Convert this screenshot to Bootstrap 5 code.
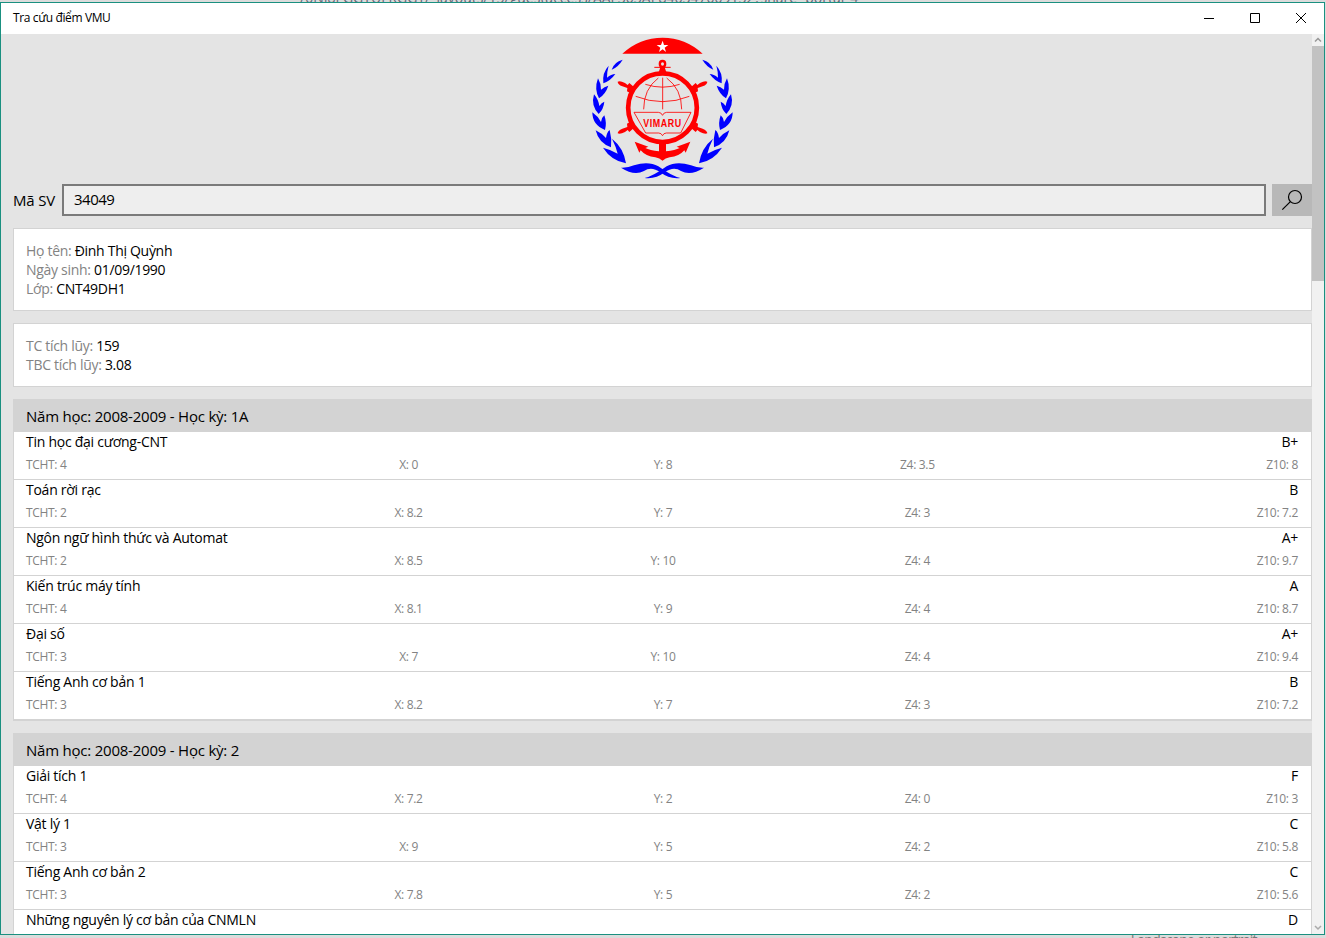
<!DOCTYPE html>
<html lang="vi">
<head>
<meta charset="utf-8">
<meta name="viewport" content="width=device-width, initial-scale=1">
<title>Tra cứu điểm VMU</title>
<link href="https://cdn.jsdelivr.net/npm/bootstrap@5.3.0/dist/css/bootstrap.min.css" rel="stylesheet">
<style>
  body { background: #dcdcdc; font-family: "Open Sans", "Noto Sans", sans-serif; color: #000; font-size: 14px; line-height: 19px; }
  .behind-top { height: 2px; line-height: 10px; font-size: 14px; color: #667; padding-left: 300px; }
  .behind-top span { position: relative; top: -7px; }
  .behind-bottom { height: 3px; line-height: 10px; font-size: 14px; color: #777; padding-left: 1117px; letter-spacing: -.7px; }
  .app-window { width: 1325px; height: 933px; border: 1px solid #1a9080; background: #e4e4e4; }
  .title-bar { height: 31px; background: #fff; font-size: 12px; padding: 0 12px; letter-spacing: -.38px; }
  .win-title { margin-top: -2px; }
  .win-buttons { gap: 34px; margin-right: 5px; margin-top: -1px; }
  .page-area { padding-left: 12px; min-width: 0; }
  .search-row { height: 32px; font-size: 15px; }
  .search-label { width: 49px; letter-spacing: -.15px; }
  .search-input.form-control { border: 2px solid #7a7a7a; border-radius: 0; background: #eee; color: #000; padding: 0 10px 2px; font-size: 15px; letter-spacing: -.5px; height: 32px; }
  .search-btn { width: 40px; height: 32px; background: #b8b8b8; border-radius: 0; margin-left: 6px; }
  .panel.card { border: 1px solid #d3d3d3; border-radius: 0; color: #000; margin-top: 12px; }
  .panel .card-body { padding: 12px; letter-spacing: -.3px; }
  .panel .card-header { height: 33px; background: #d3d3d3; border: 0; border-radius: 0; padding: 2px 12px 0 13px; margin: -1px -1px 0; font-size: 15px; line-height: 31px; letter-spacing: -.22px; }
  .course { height: 48px; padding: 0 13px 0 12px; border-bottom: 1px solid #d3d3d3; }
  .course-name { height: 21px; line-height: 19px; letter-spacing: -.26px; }
  .marks { font-size: 12px; line-height: 22px; padding-top: 1px; letter-spacing: -.32px; }
  .marks .text-center-col { padding-left: 2px; }
  .muted { color: #838383; }
  .scroll-track { width: 12px; background: #f1f1f1; }
  .scroll-thumb { height: 235px; background: #c2c2c2; }
  .scroll-arrow { height: 12px; }
</style>
</head>
<body class="vh-100 overflow-hidden">
<div class="behind-top overflow-hidden text-nowrap"><span>/0NI8LGGTUFRGGT/_layouts/15/guestaccess/AAF303AE846347009132?share=portal_4</span></div>
<div class="app-window d-flex flex-column overflow-hidden">
  <header class="title-bar d-flex flex-shrink-0 align-items-center justify-content-between">
    <span class="win-title">Tra cứu điểm VMU</span>
    <div class="win-buttons d-flex">
      <svg width="12" height="12" stroke="#000" fill="none"><path d="M1 6.500h10"/></svg>
      <svg width="12" height="12" stroke="#000" fill="none"><path d="M1.500 1.500h9v9h-9z"/></svg>
      <svg width="12" height="12" stroke="#000" fill="none"><path d="M1 1l10 10M11 1L1 11"/></svg>
    </div>
  </header>
  <div class="d-flex flex-grow-1 overflow-hidden">
    <main class="page-area flex-grow-1">
      <svg class="d-block mx-auto" width="156" height="150" viewBox="0 0 468 450">
        <path fill="#f00" d="M112 59Q164 11 233 11Q301 11 353 59Z"/>
        <path fill="#fff" d="M233 20l4 13h13l-11 8 4 13-10-8-11 8 4-13-11-8h13z"/>
        <g id="laurel" fill="#00f">
          <path d="M80 107Q87 84 113 77Q100 99 80 107Z"/>
          <path d="M71 95Q51 116 55 148Q77 140 91 120Q79 120 66 131Q66 112 71 95Z"/>
          <path d="M39 133Q27 165 42 193Q62 180 70 155Q58 158 48 167Q48 148 39 133Z"/>
          <path d="M27 181Q17 215 41 240Q56 225 58 203Q50 205 43 216Q40 196 27 181Z"/>
          <path d="M22 235Q22 273 60 288Q66 267 58 244Q50 250 48 264Q38 246 22 235Z"/>
          <path d="M32 289Q41 327 78 340Q81 314 74 288Q65 295 63 312Q49 297 32 289Z"/>
          <path d="M54 341Q79 380 123 388Q116 342 81 314Q93 338 98 359Q78 347 54 341Z"/>
        </g>
        <use href="#laurel" transform="translate(465 0) scale(-1 1)"/>
        <g id="ribbon" fill="#00f"><path d="M108 401Q129 402 147 394Q190 380 220 397Q263 428 286 432Q253 436 226 415Q199 395 177 411Q147 426 108 401Z"/></g>
        <use href="#ribbon" transform="translate(465 0) scale(-1 1)"/>
        <g fill="none" stroke="#f00">
          <circle cx="232.500" cy="221" r="103" stroke-width="14"/>
          <ellipse cx="232.500" cy="90" rx="8" ry="9" stroke-width="7"/>
          <path stroke-width="3" d="M208 100h49"/>
          <path stroke-width="2.500" d="M233 131V226M220 132Q176 165 176 226M245 132Q290 165 290 226M181 151Q233 168 284 151M152 187Q233 219 313 187"/>
          <path stroke-width="2.500" d="M147 235H220Q229 235 232.500 244Q236 235 245 235H318L287 297H244Q236 297 232.500 305Q229 297 221 297H182Z"/>
        </g>
        <path fill="#f00" d="M227 97h11l6 18h-23z"/>
        <g id="spoke" fill="#f00">
          <path d="M98 143Q105 139 120 147L128 153L133 147L151 163L140 180L126 172L127 162L112 157Q98 151 98 143Z"/>
          <path d="M98 298Q105 302 120 294L128 288L133 294L151 278L140 261L126 269L127 279L112 284Q98 290 98 298Z"/>
        </g>
        <use href="#spoke" transform="translate(465 0) scale(-1 1)"/>
        <path fill="#f00" d="M222 322H243V352Q271 349 284 342L275 338L316 323L302 356L298 349Q283 367 254 370Q241 372 232.500 380Q224 372 211 370Q182 367 167 349L163 356L149 323L190 338L181 342Q194 349 222 352Z"/>
        <text x="175" y="278" textLength="115" lengthAdjust="spacingAndGlyphs" font-family="Liberation Sans" font-size="31" letter-spacing="2" font-weight="bold" fill="#f00">VIMARU</text>
      </svg>
      <div class="search-row d-flex align-items-center">
        <label class="search-label flex-shrink-0" for="masv">Mã SV</label>
        <input id="masv" class="form-control search-input" value="34049">
        <button class="btn search-btn flex-shrink-0 p-0" aria-label="Tìm">
          <svg class="d-block mx-auto" width="22" height="22" fill="none" stroke="#000" stroke-width="1.200"><circle cx="14" cy="8" r="6.500"/><path d="M9.400 12.600L1.300 20.700"/></svg>
        </button>
      </div>
      <section class="card panel"><div class="card-body">
        <div><span class="muted">Họ tên:</span> Đinh Thị Quỳnh</div>
        <div><span class="muted">Ngày sinh:</span> 01/09/1990</div>
        <div><span class="muted">Lớp:</span> CNT49DH1</div>
      </div></section>
      <section class="card panel"><div class="card-body">
        <div><span class="muted">TC tích lũy:</span> 159</div>
        <div><span class="muted">TBC tích lũy:</span> 3.08</div>
      </div></section>
      <div id="semesters"></div>
    </main>
    <aside class="scroll-track d-flex flex-column flex-shrink-0">
      <svg class="scroll-arrow" width="12" height="12" fill="none" stroke="#999" stroke-width="1.500"><path d="M3 7.500l3-3 3 3"/></svg>
      <div class="scroll-thumb"></div>
      <svg class="scroll-arrow mt-auto" width="12" height="12" fill="none" stroke="#aaa" stroke-width="1.500"><path d="M3 4l3 3 3-3"/></svg>
    </aside>
  </div>
</div>
<div class="behind-bottom overflow-hidden text-nowrap">●&nbsp; Landscape or portrait</div>
<script src="https://cdn.jsdelivr.net/npm/bootstrap@5.3.0/dist/js/bootstrap.bundle.min.js"></script>
<script>
  // name, letter grade, credits, X, Y, Z4, Z10
  const semesters = [
    ['Năm học: 2008-2009 - Học kỳ: 1A', [
      ['Tin học đại cương-CNT', 'B+', 4, 0, 8, 3.5, 8],
      ['Toán rời rạc', 'B', 2, 8.2, 7, 3, 7.2],
      ['Ngôn ngữ hình thức và Automat', 'A+', 2, 8.5, 10, 4, 9.7],
      ['Kiến trúc máy tính', 'A', 4, 8.1, 9, 4, 8.7],
      ['Đại số', 'A+', 3, 7, 10, 4, 9.4],
      ['Tiếng Anh cơ bản 1', 'B', 3, 8.2, 7, 3, 7.2]]],
    ['Năm học: 2008-2009 - Học kỳ: 2', [
      ['Giải tích 1', 'F', 4, 7.2, 2, 0, 3],
      ['Vật lý 1', 'C', 3, 9, 5, 2, 5.8],
      ['Tiếng Anh cơ bản 2', 'C', 3, 7.8, 5, 2, 5.6],
      ['Những nguyên lý cơ bản của CNMLN', 'D']]]
  ];
  const centred = text => `<div class="col text-center-col">${text}</div>`;
  const marks = c => c.length < 3 ? '' : `
    <div class="marks muted row row-cols-5 g-0 text-center">
      <div class="col text-start">TCHT: ${c[2]}</div>${centred('X: ' + c[3])}${centred('Y: ' + c[4])}${centred('Z4: ' + c[5])}
      <div class="col text-end">Z10: ${c[6]}</div>
    </div>`;
  document.getElementById('semesters').innerHTML = semesters.map(([title, list]) => `
    <section class="card panel">
      <div class="card-header">${title}</div>
      ${list.map(c => `<div class="course"><div class="course-name d-flex justify-content-between"><span>${c[0]}</span><span>${c[1]}</span></div>${marks(c)}</div>`).join('')}
    </section>`).join('');
</script>
</body>
</html>
